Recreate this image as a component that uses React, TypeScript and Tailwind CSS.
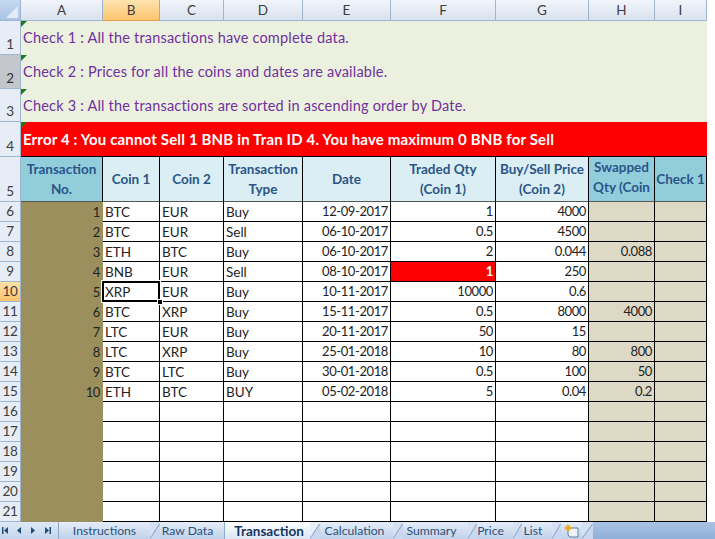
const columns = ["A", "B", "C", "D", "E", "F", "G", "H", "I"];

const rows = [
  ["1", "BTC", "EUR", "Buy", "12-09-2017", "1", "4000", ""],
  ["2", "BTC", "EUR", "Sell", "06-10-2017", "0.5", "4500", ""],
  ["3", "ETH", "BTC", "Buy", "06-10-2017", "2", "0.044", "0.088"],
  ["4", "BNB", "EUR", "Sell", "08-10-2017", "1", "250", ""],
  ["5", "XRP", "EUR", "Buy", "10-11-2017", "10000", "0.6", ""],
  ["6", "BTC", "XRP", "Buy", "15-11-2017", "0.5", "8000", "4000"],
  ["7", "LTC", "EUR", "Buy", "20-11-2017", "50", "15", ""],
  ["8", "LTC", "XRP", "Buy", "25-01-2018", "10", "80", "800"],
  ["9", "BTC", "LTC", "Buy", "30-01-2018", "0.5", "100", "50"],
  ["10", "ETH", "BTC", "BUY", "05-02-2018", "5", "0.04", "0.2"],
  ...Array.from({ length: 6 }, () => ["", "", "", "", "", "", "", ""]),
];

const checks = [
  "Check 1 : All the transactions have complete data.",
  "Check 2 : Prices for all the coins and dates are available.",
  "Check 3 : All the transactions are sorted in ascending order by Date.",
];

function Flag() {
  return (
    <span className="absolute left-0 top-0 h-0 w-0 border-r-[6px] border-t-[6px] border-r-transparent border-t-[#1f7a1f]" />
  );
}

function RowHead({ n, tone = "plain" }: { n: number; tone?: "plain" | "grey" | "orange" }) {
  const bg =
    tone === "orange"
      ? "bg-gradient-to-b from-[#fde0a6] to-[#fbc36c] text-[#3d3d3d]"
      : tone === "grey"
        ? "bg-[#c3c7cc] text-[#333]"
        : "bg-[#e6edf7] text-[#3d3d3d]";
  return (
    <div className={`flex items-end justify-center border-b border-r border-b-[#9eb6ce] border-r-[#9eb6ce] text-[13.5px] leading-[19px] tracking-[-0.3px] ${bg}`}>
      {n}
    </div>
  );
}

function HeadCell({ dark, children, tight }: { dark?: boolean; children: React.ReactNode; tight?: boolean }) {
  return (
    <div
      className={`flex items-center justify-center overflow-hidden whitespace-nowrap border-b border-r border-black border-b-[#555] text-center text-[13.5px] font-bold leading-[20px] text-[#2a5587] ${tight ? "pb-[4px]" : ""} ${dark ? "bg-[#92cddc]" : "bg-[#dbeef4]"}`}
    >
      <span>{children}</span>
    </div>
  );
}

function Slant({ width, active }: { width: string; active?: boolean }) {
  return (
    <svg viewBox="0 0 11 17" preserveAspectRatio="none" className={`h-[17px] shrink-0 ${width}`}>
      <path d="M0 17 L11 17 L11 2 Z" fill="#c9d8ee" />
      <path d="M0 17 L11 2 L11 0 L0 0 Z" fill={active ? "#e8eff9" : "#d5e1f2"} />
      <path d="M0 16.5 L10.5 2" stroke="#7f9dc4" strokeWidth="1" fill="none" />
    </svg>
  );
}

function Tab({ width, active, children }: { width: string; active?: boolean; children: React.ReactNode }) {
  return (
    <div
      className={`flex h-[17px] shrink-0 items-center justify-center whitespace-nowrap pt-[2px] ${width} ${active ? "bg-gradient-to-b from-white to-[#dbe6f5] text-[13.5px] font-bold text-[#15365e]" : "bg-gradient-to-b from-[#e6edf8] to-[#bfd1ea] text-[12.2px] text-[#2f4f78]"}`}
    >
      {children}
    </div>
  );
}

export default function App() {
  return (
    <div
      className="h-[539px] w-[715px] overflow-hidden bg-white text-[13.5px] text-[#222]"
      style={{ fontFamily: "Lato, 'Open Sans', sans-serif" }}
    >
      <div className="grid grid-cols-[21px_82px_57px_64px_79px_88px_105px_93px_66px_52px_8px] grid-rows-[21px_34px_34px_33px_35px_45px_repeat(16,20px)]">
        {/* column letters */}
        <div className="relative border-b border-r border-[#9eb6ce] bg-gradient-to-b from-[#c5d8ef] to-[#a9c4e6]">
          <svg viewBox="0 0 12 12" className="absolute bottom-[2px] right-[2px] h-3 w-3">
            <path d="M12 0 L12 12 L0 12 Z" fill="#e4ecf7" />
          </svg>
        </div>
        {columns.map((c) => (
          <div
            key={c}
            className={`flex items-center justify-center border-b border-r text-[13.5px] ${c === "B" ? "border-[#e0a24a] bg-gradient-to-b from-[#fde3ae] to-[#fac46e] text-[#3d3d3d]" : "border-[#9eb6ce] bg-gradient-to-b from-[#f1f5fb] to-[#dae2ee] text-[#3d3d3d]"}`}
          >
            {c}
          </div>
        ))}
        <div />

        {/* checks */}
        {checks.map((text, i) => (
          <div key={text} className="contents">
            <RowHead n={i + 1} tone={i === 1 ? "grey" : "plain"} />
            <div className="relative col-span-9 flex items-center bg-[#ebf1de] pl-[2px] text-[14.5px] tracking-[0.2px] text-[#7030a0]">
              <Flag />
              <span>{text}</span>
            </div>
            <div />
          </div>
        ))}

        {/* error */}
        <RowHead n={4} />
        <div className="relative col-span-9 flex items-center border-b border-black bg-[#ff0000] pl-[2px] text-[15px] font-bold tracking-[0.16px] text-white">
          <Flag />
          <span>Error 4 : You cannot Sell 1 BNB in Tran ID 4. You have maximum 0 BNB for Sell</span>
        </div>
        <div />

        {/* headers */}
        <RowHead n={5} />
        <HeadCell dark>
          Transaction
          <br />
          No.
        </HeadCell>
        <HeadCell>Coin 1</HeadCell>
        <HeadCell>Coin 2</HeadCell>
        <HeadCell>
          Transaction
          <br />
          Type
        </HeadCell>
        <HeadCell>Date</HeadCell>
        <HeadCell>
          Traded Qty
          <br />
          (Coin 1)
        </HeadCell>
        <HeadCell>
          Buy/Sell Price
          <br />
          (Coin 2)
        </HeadCell>
        <HeadCell dark tight>
          Swapped
          <br />
          Qty (Coin
        </HeadCell>
        <HeadCell dark>Check 1</HeadCell>
        <div />

        {/* data */}
        {rows.map((row, i) => {
          const num = i + 6;
          const cell = "flex items-center whitespace-nowrap border-b border-r border-black px-[2px] pt-[1px]";
          const numeric = `${cell} justify-end text-[13px] tracking-[-0.4px]`;
          return (
            <div key={num} className="contents">
              <RowHead n={num} tone={num === 10 ? "orange" : "plain"} />
              <div className="flex items-center justify-end bg-[#9c8f5e] pr-[3px] pt-[1px] text-[13px] tracking-[-0.4px] text-[#222]">{row[0]}</div>
              <div className={`relative ${cell} ${num === 10 ? "z-10" : ""}`}>
                {row[1]}
                {num === 10 && (
                  <>
                    <span className="absolute left-[-1px] top-[-1px] h-[21px] w-[58px] border-2 border-black outline outline-1 outline-white" />
                    <span className="absolute bottom-[-4px] right-[-4px] h-[6px] w-[6px] border border-white bg-black" />
                  </>
                )}
              </div>
              <div className={cell}>{row[2]}</div>
              <div className={cell}>{row[3]}</div>
              <div className={numeric}>{row[4]}</div>
              <div className={`${numeric} ${num === 9 ? "bg-[#ff0000] font-bold text-white" : ""}`}>{row[5]}</div>
              <div className={numeric}>{row[6]}</div>
              <div className={`${numeric} bg-[#ddd9c4]`}>{row[7]}</div>
              <div className={`${cell} bg-[#ddd9c4]`} />
              <div />
            </div>
          );
        })}
      </div>

      {/* sheet tabs */}
      <div className="flex h-[17px] items-stretch bg-gradient-to-b from-[#a9c2e4] to-[#8fb0da]">
        <div className="flex w-[58px] shrink-0 items-center justify-center bg-gradient-to-b from-[#dfe9f6] to-[#c4d5ec]">
          <svg viewBox="0 0 58 17" className="h-[17px] w-[58px]">
            <g fill="#1f4e79">
              <rect x="2" y="5" width="1.5" height="7" />
              <path d="M8 5 L8 12 L4 8.5 Z" />
              <path d="M21 5 L21 12 L17 8.5 Z" />
              <path d="M31 5 L31 12 L35 8.5 Z" />
              <path d="M45 5 L45 12 L49 8.5 Z" />
              <rect x="49.5" y="5" width="1.5" height="7" />
            </g>
          </svg>
        </div>
        <div className="w-[1px] shrink-0 bg-[#8fa9cc]" />
        <Tab width="w-[91px]">Instructions</Tab>
        <Slant width="w-[10px]" />
        <Tab width="w-[64px] pr-[9px]">Raw Data</Tab>
        <div className="w-[1px] shrink-0 bg-[#8fa9cc]" />
        <Tab width="w-[85px] pl-[3px]" active>
          Transaction
        </Tab>
        <Slant width="w-[10px]" active />
        <Tab width="w-[73px] pr-[4px]">Calculation</Tab>
        <Slant width="w-[10px]" />
        <Tab width="w-[65px] pr-[8px]">Summary</Tab>
        <Slant width="w-[9px]" />
        <Tab width="w-[36px] pr-[9px]">Price</Tab>
        <Slant width="w-[9px]" />
        <Tab width="w-[30px] pr-[8px]">List</Tab>
        <Slant width="w-[9px]" />
        <Tab width="w-[21px]">
          <svg viewBox="0 0 18 15" className="h-[15px] w-[18px]">
            <path d="M5 4 H15 V13 H7 L5 11 Z" fill="#eef3fa" stroke="#5f7fa8" strokeWidth="1" />
            <circle cx="5" cy="4" r="3" fill="#f2c14e" />
            <path d="M5 0.5 V7.5 M1.5 4 H8.5" stroke="#e39a1d" strokeWidth="1" />
          </svg>
        </Tab>
        <Slant width="w-[11px]" />
      </div>
    </div>
  );
}
